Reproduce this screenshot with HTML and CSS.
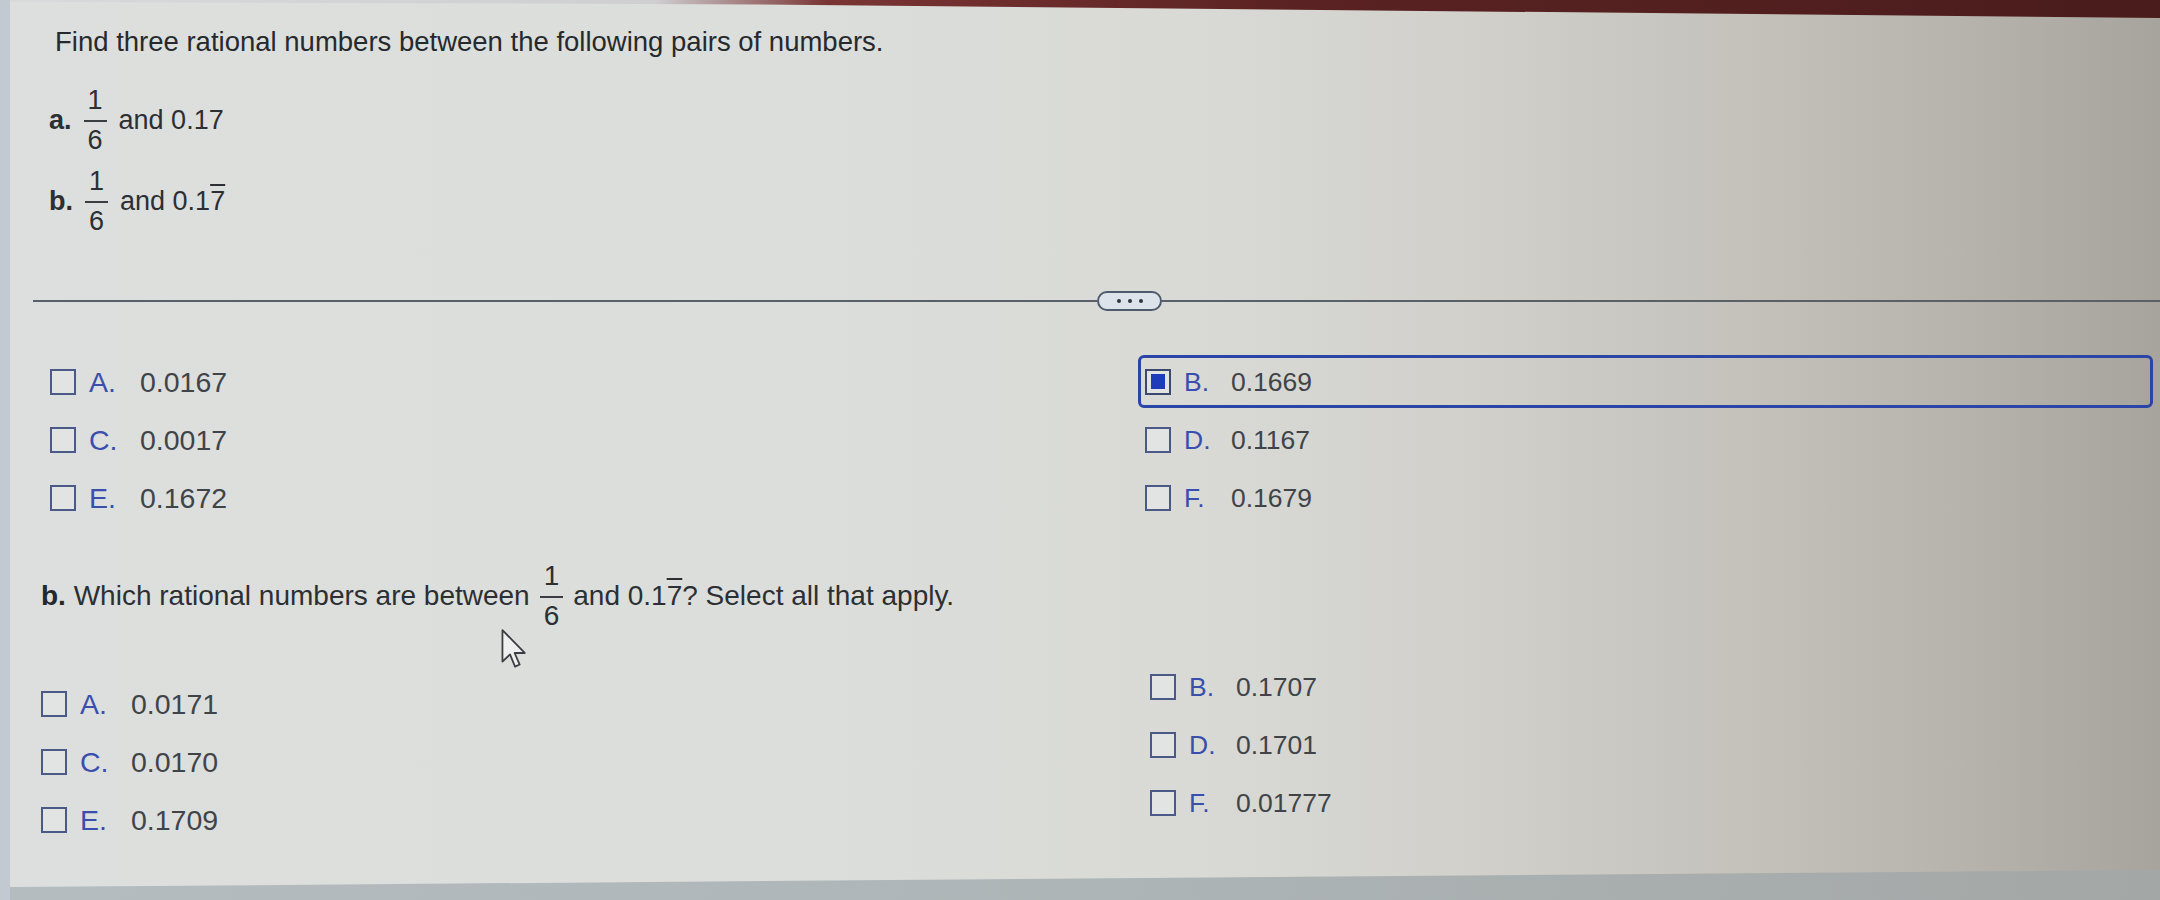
FILE: index.html
```html
<!DOCTYPE html>
<html>
<head>
<meta charset="utf-8">
<link rel="stylesheet" href="styles.css">
</head>
<body>
<div class="screen">
  <div class="topband"></div>
  <p class="title">Find three rational numbers between the following pairs of numbers.</p>

  <div class="part part-a">
    <span class="lbl">a.</span>
    <span class="frac"><span class="num">1</span><span class="bar"></span><span class="den">6</span></span>
    <span>and 0.17</span>
  </div>
  <div class="part part-b">
    <span class="lbl">b.</span>
    <span class="frac"><span class="num">1</span><span class="bar"></span><span class="den">6</span></span>
    <span>and 0.1<span class="rep">7</span></span>
  </div>

  <div class="divider">
    <span class="line line-left"></span>
    <span class="pill"><span class="dot"></span><span class="dot"></span><span class="dot"></span></span>
    <span class="line line-right"></span>
  </div>

  <div class="choices choices-1">
    <div class="opt"><span class="cb"></span><span class="key">A.</span><span class="val">0.0167</span></div>
    <div class="opt sel"><span class="cb on"><span class="fill"></span></span><span class="key">B.</span><span class="val">0.1669</span></div>
    <div class="opt"><span class="cb"></span><span class="key">C.</span><span class="val">0.0017</span></div>
    <div class="opt"><span class="cb"></span><span class="key">D.</span><span class="val">0.1167</span></div>
    <div class="opt"><span class="cb"></span><span class="key">E.</span><span class="val">0.1672</span></div>
    <div class="opt"><span class="cb"></span><span class="key">F.</span><span class="val">0.1679</span></div>
  </div>

  <div class="part question">
    <span><b>b.</b> Which rational numbers are between</span>
    <span class="frac"><span class="num">1</span><span class="bar"></span><span class="den">6</span></span>
    <span>and 0.1<span class="rep">7</span>? Select all that apply.</span>
  </div>

  <div class="choices-2">
    <div class="col col-left">
      <div class="opt"><span class="cb"></span><span class="key">A.</span><span class="val">0.0171</span></div>
      <div class="opt"><span class="cb"></span><span class="key">C.</span><span class="val">0.0170</span></div>
      <div class="opt"><span class="cb"></span><span class="key">E.</span><span class="val">0.1709</span></div>
    </div>
    <div class="col col-right">
      <div class="opt"><span class="cb"></span><span class="key">B.</span><span class="val">0.1707</span></div>
      <div class="opt"><span class="cb"></span><span class="key">D.</span><span class="val">0.1701</span></div>
      <div class="opt"><span class="cb"></span><span class="key">F.</span><span class="val">0.01777</span></div>
    </div>
  </div>

  <div class="bottomband"></div>

  <svg class="cursor" width="28" height="42" viewBox="0 0 13 20">
    <path d="M1 1 L1 16 L4.6 12.6 L7 18.4 L9.2 17.4 L6.8 11.9 L11.6 11.9 Z" fill="#eef0ef" stroke="#3a3d42" stroke-width="0.85" stroke-linejoin="round"/>
  </svg>
</div>
</body>
</html>
```

FILE: styles.css
```css
html, body {
  margin: 0;
  padding: 0;
}

body {
  width: 2160px;
  height: 900px;
  overflow: hidden;
  font-family: "Liberation Sans", Arial, sans-serif;
  font-size: 27px;
  color: #2c2f33;
}

.screen {
  position: relative;
  width: 2160px;
  height: 900px;
  box-sizing: border-box;
  border-left: 10px solid #c3c9d0;
  display: flex;
  flex-direction: column;
  background: linear-gradient(90deg, #dcdfdd 0%, #dcdedb 35%, #d9dad6 55%, #d1d0cb 68%, #c3c0ba 82%, #b3afa9 93%, #a7a39d 100%);
}

.topband {
  flex: none;
  height: 18px;
  background: linear-gradient(90deg, #d7d9da 0%, #cfcfd1 30%, #7a3434 38%, #5a2222 60%, #4a1c1c 100%);
  clip-path: polygon(0 0, 100% 0, 100% 100%, 35% 25%, 0 10%);
}

.title {
  margin: 8px 0 0 45px;
  font-size: 27.5px;
  line-height: 32px;
  color: #26292d;
}

.part {
  display: flex;
  align-items: center;
  height: 70px;
  gap: 12px;
  line-height: 32px;
}

.part-a {
  margin: 27px 0 0 39px;
}

.part-b {
  margin: 11px 0 0 39px;
}

.lbl {
  font-weight: bold;
}

.frac {
  display: flex;
  flex-direction: column;
  align-items: center;
}

.num, .den {
  line-height: 30px;
  padding: 0 4px;
}

.bar {
  align-self: stretch;
  height: 2px;
  margin: 5px 0 3px;
  background: #3a3d42;
}

.rep {
  text-decoration: overline;
  text-decoration-thickness: 2px;
}

.divider {
  display: flex;
  align-items: center;
  height: 20px;
  margin: 55px 0 0 23px;
}

.line {
  height: 2px;
  background: #5a6067;
}

.line-left {
  width: 1064px;
}

.line-right {
  flex: 1;
}

.pill {
  width: 65px;
  height: 20px;
  box-sizing: border-box;
  border: 2px solid #4e5b6c;
  border-radius: 10px;
  background: #dde3ea;
  display: flex;
  align-items: center;
  justify-content: center;
  gap: 7px;
}

.dot {
  width: 4px;
  height: 4px;
  border-radius: 50%;
  background: #2f3640;
}

.choices-1 {
  display: grid;
  grid-template-columns: 1095px 1015px;
  row-gap: 5px;
  margin: 44px 0 0 33px;
}

.opt {
  display: flex;
  align-items: center;
  height: 53px;
  box-sizing: border-box;
  border: 3px solid transparent;
  border-radius: 6px;
  padding-left: 4px;
  line-height: 32px;
}

.choices-1 .opt:nth-child(odd),
.col-left .opt {
  font-size: 28.5px;
}

.choices-1 .opt:nth-child(even),
.col-right .opt {
  font-size: 26.5px;
}

.opt.sel {
  border-color: #2a45a6;
}

.cb {
  flex: none;
  width: 26px;
  height: 26px;
  box-sizing: border-box;
  border: 2px solid #4b5989;
  background: #e2e4e3;
  display: flex;
  align-items: center;
  justify-content: center;
}

.cb.on {
  border-color: #3c4870;
}

.fill {
  width: 14px;
  height: 15px;
  background: #1e3cba;
}

.key {
  width: 51px;
  margin-left: 13px;
  color: #3a4ead;
}

.choices-1 .opt:nth-child(even) .key,
.col-right .key {
  width: 47px;
}

.val {
  color: #404449;
}

.question {
  margin: 37px 0 0 31px;
  gap: 10px;
  font-size: 28px;
}

.question b {
  color: #25282c;
}

.choices-2 {
  display: flex;
}

.col {
  display: flex;
  flex-direction: column;
  gap: 5px;
}

.col-left {
  width: 1109px;
  margin: 46px 0 0 24px;
}

.col-right {
  width: 1000px;
  margin-top: 29px;
}

.bottomband {
  flex: none;
  margin-top: auto;
  height: 30px;
  background: linear-gradient(90deg, #b4bcc0 0%, #aeb5b7 50%, #a3a8a6 100%);
  clip-path: polygon(0 57%, 100% 0, 100% 100%, 0 100%);
}

.cursor {
  position: absolute;
  left: 490px;
  top: 628px;
}
```
